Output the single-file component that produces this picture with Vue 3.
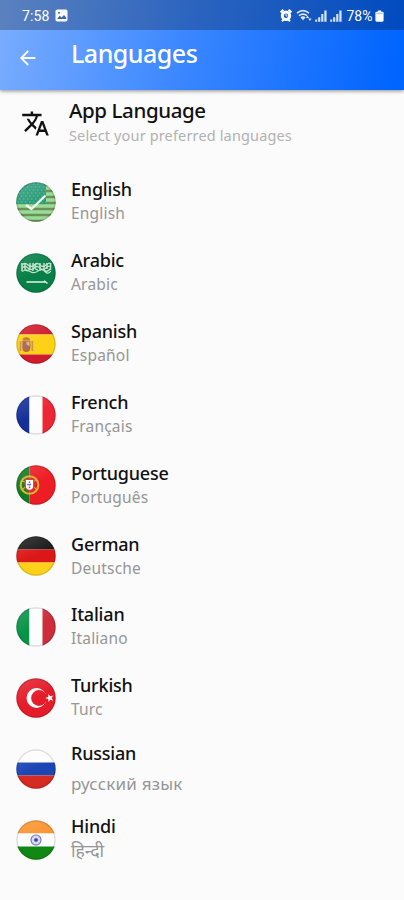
<template>
  <div class="screen">
    <header class="header">
      <div class="statusbar">
        <span class="time">7:58</span>
        <svg class="photo" viewBox="0 0 13 13">
          <rect x="0.5" y="0.5" width="12" height="12" rx="1.8" fill="#fff" />
          <path d="M2 10 L4.8 6.8 L6.6 8.6 L9 6 L11.2 8.6 V10 Z" fill="#3c68b4" />
          <circle cx="4" cy="3.8" r="1" fill="#3c68b4" />
        </svg>
        <span class="grow"></span>
        <svg class="alarm" viewBox="0 0 12 13">
          <path d="M0.6 3.4 L3.4 0.8 M11.4 3.4 L8.6 0.8 M2 12.3 L3.5 10.8 M10 12.3 L8.5 10.8" stroke="#fff" stroke-width="2" />
          <circle cx="6" cy="6.8" r="3.7" fill="none" stroke="#fff" stroke-width="3" />
          <path d="M6 5 V7 H7.5" fill="none" stroke="#fff" stroke-width="0.9" />
        </svg>
        <svg class="wifi" viewBox="0 0 16 13">
          <path d="M1 4.2 Q7 -0.8 13 4.2 M3 6.7 Q7 3.4 11 6.7 M5 9 Q7 7.4 9 9" fill="none" stroke="#dbe7fb" stroke-width="1.7" />
          <path d="M5.4 9 H8.6 L7 11.4 Z M9.8 9 L11.5 6.6 L13.2 9 Z M12.2 9.4 H15.6 L13.9 12 Z" fill="#dbe7fb" />
        </svg>
        <svg v-for="n in 2" :key="n" class="signal" viewBox="0 0 12 12">
          <path d="M0.2 9.4 H2.2 V11.8 H0.2 Z M3.1 7.2 H5.3 V11.8 H3.1 Z M6.2 4 H8.4 V11.8 H6.2 Z M9.3 0.6 H11.6 V11.8 H9.3 Z" fill="#d3e1f9" />
        </svg>
        <span class="percent">78%</span>
        <svg class="battery" viewBox="0 0 9 12">
          <path d="M2.8 0.4 H6.2 V1.7 H7.5 Q8.6 1.7 8.6 2.8 V10.6 Q8.6 11.7 7.5 11.7 H1.5 Q0.4 11.7 0.4 10.6 V2.8 Q0.4 1.7 1.5 1.7 H2.8 Z" fill="#fff" />
          <path d="M1.4 2.7 H7.6 V4 H1.4 Z" fill="#a9c3ed" />
        </svg>
      </div>
      <div class="toolbar">
        <svg class="back" viewBox="0 0 16 16">
          <path d="M15.4 8 H1.4 M8.2 1 L1.2 8 L8.2 15" fill="none" stroke="#fff" stroke-width="1.8" />
        </svg>
        <h1 class="title">Languages</h1>
      </div>
    </header>

    <section class="intro">
      <svg class="translate" viewBox="0 0 24 24">
        <path
          d="M12.87 15.07l-2.54-2.51.03-.03c1.74-1.94 2.98-4.17 3.71-6.53H17V4h-7V2H8v2H1v1.99h11.17C11.5 7.92 10.44 9.75 9 11.35 8.07 10.32 7.3 9.19 6.69 8h-2c.73 1.63 1.73 3.17 2.98 4.56l-5.09 5.02L4 19l5-5 3.11 3.11.76-2.04zM18.5 10h-2L12 22h2l1.12-3h4.75L21 22h2l-4.5-12zm-2.62 7l1.62-4.33L19.12 17h-3.24z"
          fill="#111"
        />
      </svg>
      <div>
        <h2 class="intro-title">App Language</h2>
        <p class="intro-text">Select your preferred languages</p>
      </div>
    </section>

    <ul class="list">
      <li v-for="lang in languages" :key="lang.code" class="row" :class="lang.code">
        <svg class="flag" viewBox="0 0 40 40">
          <defs>
            <clipPath :id="'clip-' + lang.code"><circle cx="20" cy="20" r="19.7" /></clipPath>
            <linearGradient :id="'shine-' + lang.code" x1="0" y1="0" x2="0.5" y2="1">
              <stop offset="0" stop-color="#fff" stop-opacity="0.16" />
              <stop offset="0.6" stop-color="#fff" stop-opacity="0" />
            </linearGradient>
          </defs>
          <g :clip-path="`url(#clip-${lang.code})`">
            <rect
              v-for="(band, i) in lang.bands"
              :key="i"
              :x="band[0]"
              :y="band[1]"
              :width="band[2]"
              :height="band[3]"
              :fill="band[4]"
            />
            <g v-if="lang.code === 'en'">
              <path v-for="n in 7" :key="n" :d="`M0 ${n * 6 - 3} H40`" stroke="#6d8f58" stroke-width="2.4" />
              <rect width="30" height="22" fill="#2b9c7b" />
              <path
                v-for="n in 7"
                :key="'s' + n"
                :d="`M${n % 2 ? 1 : 3} ${n * 3 - 1} H30`"
                stroke="#6dbd9d"
                stroke-width="1.2"
                stroke-dasharray="1.5 2.5"
              />
              <path d="M10 23 L15.5 27 L29.5 13.5" fill="none" stroke="#f4fff0" stroke-width="2.2" />
            </g>
            <g v-if="lang.code === 'ar'" fill="none" stroke="#c4e0cd">
              <path d="M6 10 V18 M9 11 V16 Q12 20 14 15 V10 M17 10 V18 M20 11 Q17 16 22 17 M24 10 V18 M28 10 V17 Q31 20 34 16 M31 10 V16 M34.5 10 V17" stroke-width="1.5" />
              <path d="M6 12 Q9 9 12 12 T18 12 T24 12 T30 12 T35 11 M6 15 Q9 12 12 15 T18 15 T24 15 T30 15 T35 14 M6 18.5 Q10 16 14 18.5 T22 18 T29 18.5 T35 18" stroke-width="1.2" />
              <path d="M10.5 29 H30 M28 27.8 L31.5 30.5" stroke="#e3f2e7" stroke-width="1.4" />
            </g>
            <g v-if="lang.code === 'es'">
              <path d="M4.5 17 V27 M16.3 17 V27" stroke="#c69555" stroke-width="1.7" />
              <path d="M6.3 17 H14.4 V23.5 Q14.4 28 10.3 28 Q6.3 28 6.3 23.5 Z" fill="#b8684b" />
              <path d="M6.5 16.5 Q6.5 13.2 10.3 13.2 Q14 13.2 14 16.5 Z" fill="#b87833" />
              <rect x="10.5" y="17.8" width="3" height="3.8" fill="#d8b7a0" />
              <circle cx="10.3" cy="22.3" r="1.7" fill="#767a9c" />
            </g>
            <g v-if="lang.code === 'pt'">
              <circle cx="13.5" cy="20" r="8.8" fill="none" stroke="#d5b62f" stroke-width="2.1" />
              <path d="M5.5 16 Q14 17 21 25 M6 25 Q14 17 21 15" fill="none" stroke="#d5b62f" stroke-width="1.1" />
              <path d="M8.6 13.6 H18.4 V21 Q18.4 26.4 13.5 26.4 Q8.6 26.4 8.6 21 Z" fill="#e63535" />
              <path d="M9.9 15 H17.1 V21 Q17.1 24.8 13.5 24.8 Q9.9 24.8 9.9 21 Z" fill="#fff" />
              <path d="M13.5 16.5 V23 M11.2 19.5 H15.8" stroke="#5871a5" stroke-width="1.5" stroke-dasharray="1.5 1" />
            </g>
            <g v-if="lang.code === 'tr'">
              <circle cx="20.5" cy="20" r="10" fill="#fff" />
              <circle cx="23" cy="20" r="7.9" fill="#e51d2b" />
              <path d="M29.2 20 L32.3 18.9 L32.4 15.9 L34.3 18.3 L37.3 17.4 L35.5 20 L37.3 22.6 L34.3 21.7 L32.4 24.1 L32.3 21.1 Z" fill="#fff" />
            </g>
            <g v-if="lang.code === 'hi'">
              <circle cx="20" cy="20" r="5" fill="#e3e5f5" stroke="#6b70b8" stroke-width="1.1" />
              <path d="M20 15 V25 M15 20 H25 M16.5 16.5 L23.5 23.5 M23.5 16.5 L16.5 23.5" stroke="#9da1d3" stroke-width="0.5" />
              <circle cx="20" cy="20" r="1.8" fill="#353b99" />
            </g>
            <rect width="40" height="40" :fill="`url(#shine-${lang.code})`" />
          </g>
          <circle cx="20" cy="20" r="19" fill="none" stroke="#000" stroke-opacity="0.12" stroke-width="1.5" />
        </svg>
        <div class="names">
          <div class="name">{{ lang.name }}</div>
          <div class="native">{{ lang.native }}</div>
        </div>
      </li>
    </ul>
  </div>
</template>

<script setup>
const columns = (a, b, c) => [
  [0, 0, 13.5, 40, a],
  [13.5, 0, 13, 40, b],
  [26.5, 0, 13.5, 40, c],
];
const stripes = (a, b, c) => [
  [0, 0, 40, 13.5, a],
  [0, 13.5, 40, 13, b],
  [0, 26.5, 40, 13.5, c],
];

const languages = [
  { code: "en", name: "English", native: "English", bands: [[0, 0, 40, 40, "#98dc98"]] },
  { code: "ar", name: "Arabic", native: "Arabic", bands: [[0, 0, 40, 40, "#078047"]] },
  {
    code: "es",
    name: "Spanish",
    native: "Español",
    bands: [
      [0, 0, 40, 10.5, "#d01c2c"],
      [0, 10.5, 40, 20, "#fcd116"],
      [0, 30.5, 40, 9.5, "#d01c2c"],
    ],
  },
  { code: "fr", name: "French", native: "Français", bands: columns("#142f99", "#fdfdfd", "#ed2635") },
  {
    code: "pt",
    name: "Portuguese",
    native: "Português",
    bands: [
      [0, 0, 13.5, 40, "#137c22"],
      [13.5, 0, 26.5, 40, "#ee1c25"],
    ],
  },
  { code: "de", name: "German", native: "Deutsche", bands: stripes("#1c1c1c", "#dc1717", "#ffd21a") },
  { code: "it", name: "Italian", native: "Italiano", bands: columns("#079448", "#fdfdfd", "#cd2c3b") },
  { code: "tr", name: "Turkish", native: "Turc", bands: [[0, 0, 40, 40, "#e51d2b"]] },
  { code: "ru", name: "Russian", native: "русский язык", bands: stripes("#fdfdfd", "#1a46b4", "#d52b22") },
  { code: "hi", name: "Hindi", native: "हिन्दी", bands: stripes("#fb9532", "#fdfdfd", "#128814") },
];
</script>

<style>
body {
  background: #fbfbfb;
}
</style>

<style scoped>
.screen {
  height: 900px;
  overflow: hidden;
  background: #fbfbfb;
  font-family: "Noto Sans", sans-serif;
  color: #111;
}
h1,
h2,
p,
ul {
  margin: 0;
  padding: 0;
  font-weight: 400;
}
.header {
  height: 90px;
  background: linear-gradient(100deg, #7aadff 0%, #3885ff 48%, #0064ff 98%);
  box-shadow: 0 1px 4px rgba(0, 0, 0, 0.45);
}
.statusbar {
  display: flex;
  align-items: center;
  box-sizing: border-box;
  height: 30px;
  padding: 1px 20px 0 22px;
  background: rgba(0, 0, 0, 0.25);
  color: #fff;
  font-family: Roboto, sans-serif;
  font-size: 14px;
}
.time {
  letter-spacing: 0.1px;
}
.photo {
  width: 13px;
  height: 13px;
  margin-left: 6px;
}
.grow {
  flex: 1;
}
.alarm {
  width: 12px;
  height: 13px;
}
.wifi {
  width: 16px;
  height: 13px;
  margin-left: 4px;
}
.signal {
  width: 12px;
  height: 12px;
  margin-left: 3px;
}
.percent {
  margin-left: 5px;
}
.battery {
  width: 9px;
  height: 12px;
  margin-left: 2.5px;
}
.toolbar {
  display: flex;
  height: 60px;
  padding-left: 20px;
}
.back {
  width: 16px;
  height: 16px;
  margin-top: 20px;
}
.title {
  margin: 5px 0 0 35px;
  color: #fff;
  font-size: 25px;
  font-weight: 500;
  line-height: 36px;
  letter-spacing: -0.5px;
}
.intro {
  display: flex;
  height: 76px;
}
.translate {
  width: 29px;
  height: 29px;
  margin: 19px 19px 0 21px;
}
.intro-title {
  margin-top: 6px;
  font-size: 20.5px;
  line-height: 28px;
  font-weight: 500;
  letter-spacing: -0.4px;
}
.intro-text {
  color: #b2b2b2;
  font-size: 14.5px;
  line-height: 22px;
  letter-spacing: 0.15px;
}
.list {
  list-style: none;
}
.row {
  display: flex;
  height: 70.85px;
}
.flag {
  width: 40px;
  height: 40px;
  margin: 16px 15px 0 16px;
}
.names {
  padding-top: 11.4px;
}
.name {
  font-size: 18px;
  font-weight: 500;
  line-height: 24px;
  letter-spacing: -0.2px;
}
.native {
  color: #969696;
  font-size: 15.5px;
  line-height: 25px;
  letter-spacing: 0.2px;
}
.ru .names {
  padding-top: 8px;
}
.ru .native {
  padding-top: 6px;
  font-size: 17px;
}
.hi .names {
  padding-top: 10px;
}
.hi .native {
  font-size: 17.5px;
  letter-spacing: 0;
}
</style>
